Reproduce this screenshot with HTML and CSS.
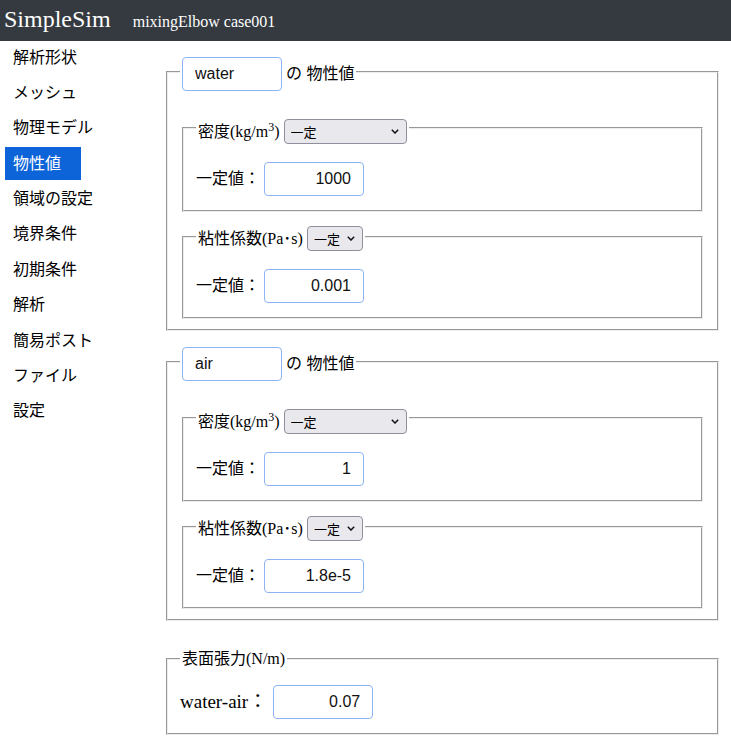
FILE: index.html
```html
<!DOCTYPE html>
<html lang="ja">
<head>
<meta charset="utf-8">
<title>SimpleSim</title>
<link rel="stylesheet" href="styles.css">
</head>
<body>
<header class="topbar"><span class="brand">SimpleSim</span><span class="case">mixingElbow case001</span></header>
<div class="layout">
  <nav class="side">
    <a class="nav-item">解析形状</a>
    <a class="nav-item">メッシュ</a>
    <a class="nav-item">物理モデル</a>
    <a class="nav-item active">物性値</a>
    <a class="nav-item">領域の設定</a>
    <a class="nav-item">境界条件</a>
    <a class="nav-item">初期条件</a>
    <a class="nav-item">解析</a>
    <a class="nav-item">簡易ポスト</a>
    <a class="nav-item">ファイル</a>
    <a class="nav-item">設定</a>
  </nav>
  <main class="main">
    <fieldset class="group">
      <legend class="glegend"><div class="lg"><input class="field name" value="water"><span class="of">の 物性値</span></div></legend>
      <fieldset class="prop first">
        <legend class="plegend dens"><div class="lg"><span>密度(kg/m<sup>3</sup>)</span><span class="selwrap"><select class="sel wide"><option>一定</option></select><svg class="chev" viewBox="0 0 8 5"><polyline points="0.8,0.8 4,4 7.2,0.8"/></svg></span></div></legend>
        <div class="row"><span class="lbl">一定値：</span><input class="field num" value="1000"></div>
      </fieldset>
      <fieldset class="prop second">
        <legend class="plegend visc"><div class="lg"><span>粘性係数(Pa･s)</span><span class="selwrap"><select class="sel narrow"><option>一定</option></select><svg class="chev" viewBox="0 0 8 5"><polyline points="0.8,0.8 4,4 7.2,0.8"/></svg></span></div></legend>
        <div class="row"><span class="lbl">一定値：</span><input class="field num" value="0.001"></div>
      </fieldset>
    </fieldset>

    <fieldset class="group next">
      <legend class="glegend"><div class="lg"><input class="field name" value="air"><span class="of">の 物性値</span></div></legend>
      <fieldset class="prop first">
        <legend class="plegend dens"><div class="lg"><span>密度(kg/m<sup>3</sup>)</span><span class="selwrap"><select class="sel wide"><option>一定</option></select><svg class="chev" viewBox="0 0 8 5"><polyline points="0.8,0.8 4,4 7.2,0.8"/></svg></span></div></legend>
        <div class="row"><span class="lbl">一定値：</span><input class="field num" value="1"></div>
      </fieldset>
      <fieldset class="prop second">
        <legend class="plegend visc"><div class="lg"><span>粘性係数(Pa･s)</span><span class="selwrap"><select class="sel narrow"><option>一定</option></select><svg class="chev" viewBox="0 0 8 5"><polyline points="0.8,0.8 4,4 7.2,0.8"/></svg></span></div></legend>
        <div class="row"><span class="lbl">一定値：</span><input class="field num" value="1.8e-5"></div>
      </fieldset>
    </fieldset>

    <fieldset class="tension">
      <legend class="tlegend">表面張力(N/m)</legend>
      <div class="row wide-gap"><span class="lbl big">water-air<span class="colon">：</span></span><input class="field num" value="0.07"></div>
    </fieldset>
  </main>
</div>
</body>
</html>
```
FILE: styles.css
```css
* { box-sizing: border-box; }
body {
  margin: 0;
  font-family: "Liberation Serif", "Noto Sans CJK JP", serif;
  font-size: 16px;
  color: #000;
  background: #fff;
}
.topbar {
  height: 41px;
  background: #343a40;
  color: #fff;
  display: flex;
  align-items: baseline;
  padding: 5px 0 0 4px;
}
.brand { font-size: 24px; line-height: 28px; margin-right: 22px; }
.case { font-size: 16px; line-height: 28px; }

.layout { display: grid; grid-template-columns: 150px 1fr; }
.side {
  display: flex;
  flex-direction: column;
  align-items: flex-start;
  padding-left: 5px;
}
.nav-item {
  font-family: "Liberation Sans", "Noto Sans CJK JP", sans-serif;
  font-size: 16px;
  line-height: 24px;
  padding: 4.6px 20px 4.6px 8px;
  margin-bottom: 2.2px;
  color: #000;
  text-decoration: none;
}
.nav-item.active { background: #0d63d8; color: #fff; }

.main { padding: 12px 10px 0 14px; }

fieldset {
  margin: 0 2px;
  border: 2px groove #ececec;
  min-width: 0;
}
.group { padding: 21px 12px 10px; }
.group.next { margin-top: 12px; }
.prop { padding: 18px 12px 14px; }
.prop.second { margin-top: 10px; }
.tension { margin-top: 26px; padding: 14px 12px 14px; }

legend { padding: 0 2px; }
.glegend { padding-top: 4px; }
.plegend.dens { padding-top: 7px; }
.plegend.visc { padding-top: 4px; }
.tlegend { line-height: 24px; }

.lg { display: flex; align-items: center; gap: 4px; line-height: 24px; }
.of { font-family: "Liberation Sans", "Noto Sans CJK JP", sans-serif; font-size: 16px; }
sup { font-size: 12px; vertical-align: 6px; line-height: 0; }

.selwrap { position: relative; display: inline-flex; }
.sel {
  appearance: none;
  -webkit-appearance: none;
  height: 25px;
  border: 1px solid #8f8f9d;
  border-radius: 4px;
  background: #e9e9ed;
  font-family: "Noto Sans CJK JP", sans-serif;
  font-size: 13px;
  color: #000;
  padding: 0 0 0 6px;
  margin: 0;
}
.sel.wide { width: 123px; }
.sel.narrow { width: 56px; }
.chev {
  position: absolute;
  right: 8px;
  top: 10px;
  width: 8px;
  height: 5px;
  pointer-events: none;
}
.chev polyline { fill: none; stroke: #111; stroke-width: 1.5; }

.row { display: flex; align-items: center; gap: 4px; }
.row.wide-gap { gap: 6px; }
.lbl { font-size: 16px; line-height: 24px; white-space: pre; }
.lbl.big { font-size: 19px; }

.field {
  width: 100px;
  height: 34px;
  border: 1px solid #8cb4f2;
  border-radius: 4px;
  padding: 0 12px;
  margin: 0;
  font-family: "Liberation Sans", "Noto Sans CJK JP", sans-serif;
  font-size: 16px;
  color: #111;
  background: #fff;
  outline: none;
}
.num { text-align: right; }
.name { text-align: left; }
```
